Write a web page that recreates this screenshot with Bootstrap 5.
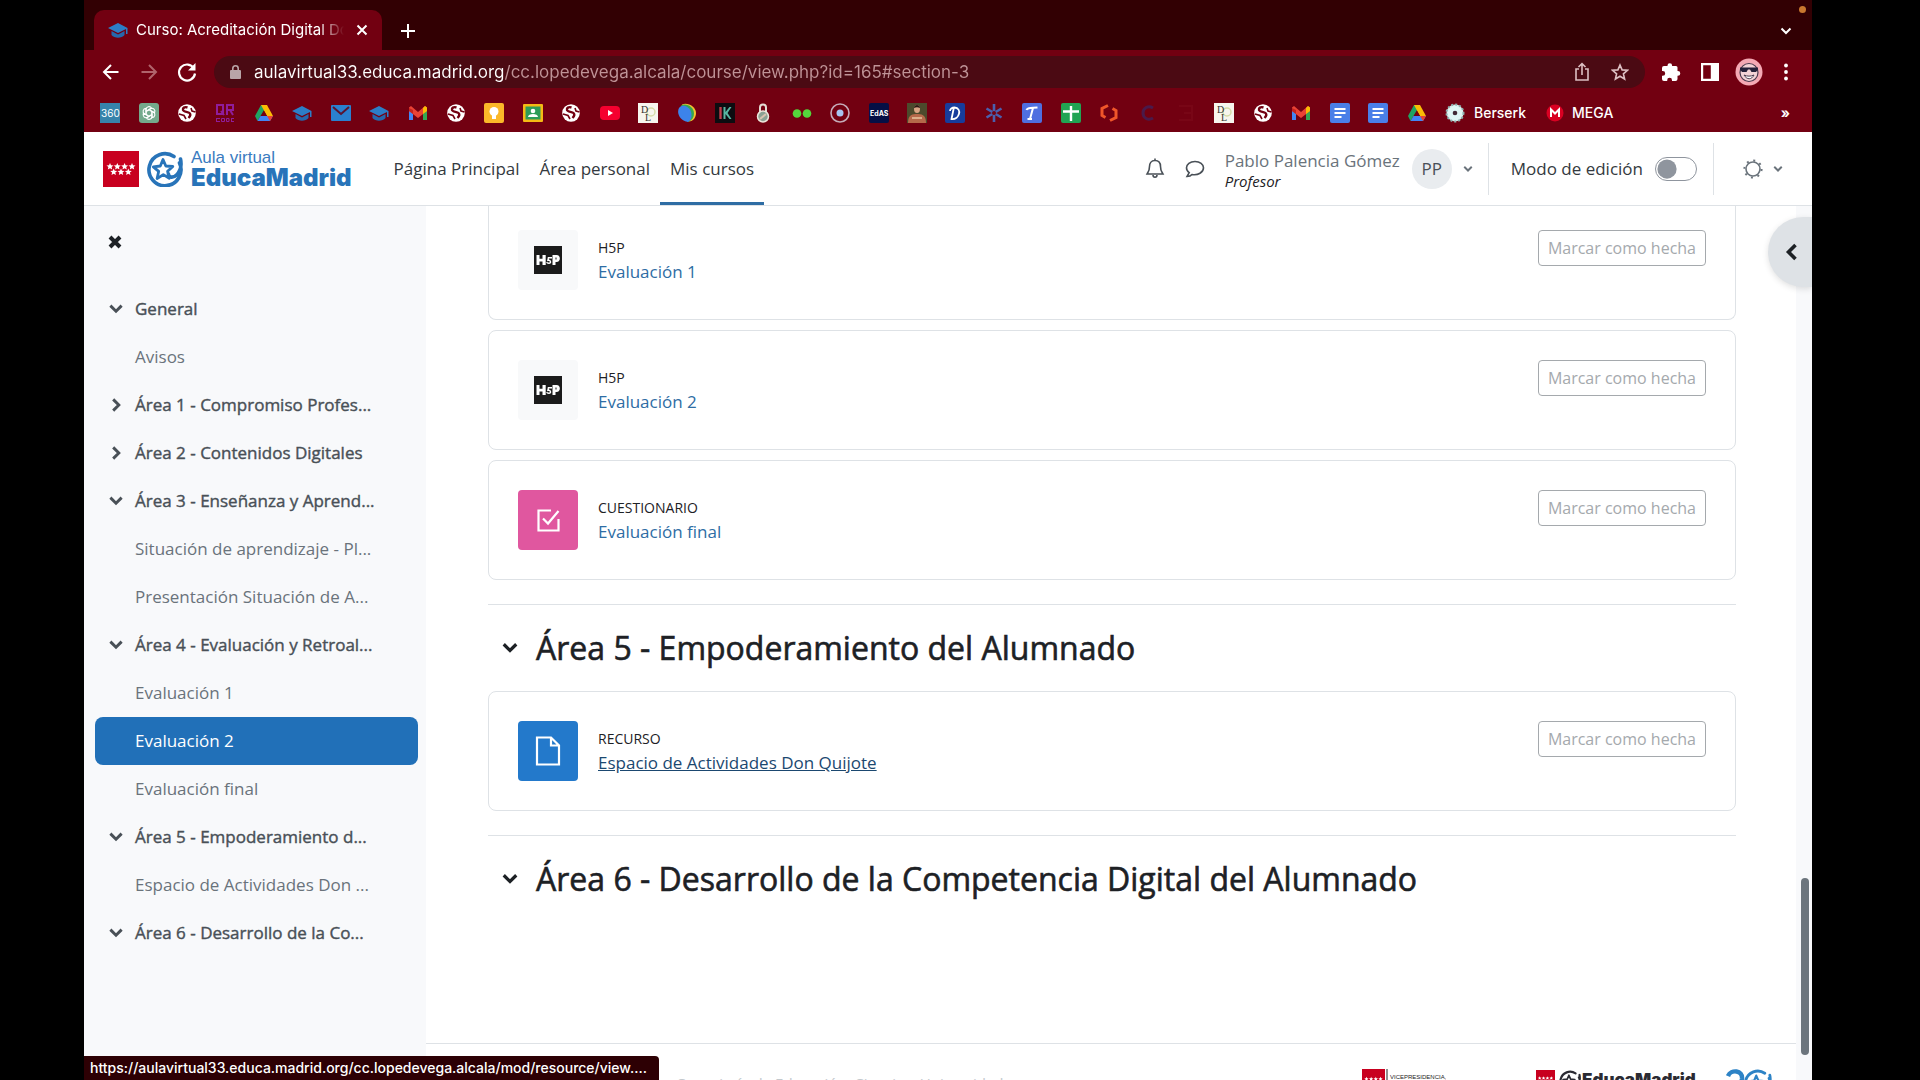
<!DOCTYPE html>
<html lang="es">
<head>
<meta charset="utf-8">
<meta name="viewport" content="width=device-width, initial-scale=1">
<title>Curso: Acreditación Digital Docente</title>
<link href="https://cdn.jsdelivr.net/npm/bootstrap@5.3.0/dist/css/bootstrap.min.css" rel="stylesheet">
<style>
body{background:#000;font-family:"Open Sans","Noto Sans",sans-serif;font-size:17px;line-height:24px;color:#1d2125}
a{text-decoration:none}
.browser{margin:0 108px 0 84px;background:#fff}
.chrome-font{font-family:Inter,"Liberation Sans",sans-serif}
.tabstrip{background:#320003;height:50px;padding-left:10px;padding-right:18px}
.tab{background:#720011;width:288px;height:40px;border-radius:10px 10px 0 0;padding:0 14px 0 14px;color:#fff;font-size:15px}
.tab-title{width:208px;-webkit-mask-image:linear-gradient(90deg,#000 88%,transparent)}
.plain{background:none;border:0;padding:0;color:inherit;display:inline-flex;align-items:center;justify-content:center}
.rec-dot{width:7px;height:7px;right:6px;top:6px;background:#c8782f}
.toolbar{background:#720011;height:44px;padding:0 23px 0 16px;color:#fff}
.urlbar{background:#4b0a13;height:32px;border-radius:16px;padding:0 16px}
.url-input{border:0;outline:0;padding:0;font-size:17px;line-height:24px;height:24px;color:#fff;background-image:linear-gradient(90deg,#fff 250px,#bf9397 250px);-webkit-background-clip:text;background-clip:text;-webkit-text-fill-color:transparent}
.fav-btn{margin-left:12px}
.bookmarks{background:#720011;height:38px;color:#fff;font-size:14px;padding-left:7px}
.bm-tail{width:338px;padding-right:22px}
.topnav{height:74px;border-bottom:1px solid #dee2e6;padding-left:19px}
.topnav .nav-link{color:#343a40;padding:0 10px;height:73px;border-top:3px solid transparent;border-bottom:3px solid transparent}
.topnav .nav-link.active{border-bottom-color:#2e6da4}
.logo-swirl{margin-left:6px;color:#2874b9}
.logo-top{font-family:"Liberation Sans",Arial,sans-serif;font-size:17px;line-height:19px;color:#3a7bc0}
.logo-name{font-family:Inter,sans-serif;font-weight:900;font-size:24px;line-height:22px;color:#2874b9}
.ink-soft{color:#6a737b}
.role{font-size:15px;line-height:16px}
.user-btn{gap:10px}
.avatar{width:40px;height:40px;background:#e9ecef;color:#495057}
.vr-line{width:1px;height:52px;background:#dee2e6}
.user-rule{margin-left:14px}
.edit-label{padding:0 12px 0 22px;color:#343a40}
.form-check-input.edit-switch{width:42px;height:24px;margin:0;border-color:#8f959e;background-color:#fff;
 --bs-form-switch-bg:url("data:image/svg+xml,%3csvg xmlns='http://www.w3.org/2000/svg' viewBox='-4 -4 8 8'%3e%3ccircle r='3.5' fill='%238f959e'/%3e%3c/svg%3e")}
.course-index{width:342px;flex:none;background:#f8f9fb;padding:24px 8px 0 11px}
.idx-list{padding-top:7px}
.idx-row{height:48px;border-radius:8px;color:#495057;padding-left:12px}
.idx-row.head{-webkit-text-stroke:.4px currentColor}
.idx-row .idx-ico{width:28px;display:flex;color:#495057}
.idx-row.sub{padding-left:40px;color:#6a737b}
.idx-row.on{background:#2170b8;color:#fff}
.course-main{padding:0 60px 0 62px}
.act-list{gap:10px}
.act{border:1px solid #dee2e6;border-radius:8px;padding:29px}
.act.cut{border-top:0;border-radius:0 0 8px 8px;padding-top:24px}
.act-ico{width:60px;height:60px;border-radius:4px}
.act-kind{font-size:14px;line-height:20px}
.act a{color:#2e6da4;line-height:28px}
.act a.hovered{color:#1b4870;text-decoration:underline}
.btn-done{font-size:16px;line-height:24px;height:36px;padding:0 9px;border:1px solid #a5a9ad;border-radius:4px;color:#a5a9ad;background:#fff}
.sect{border-top:1px solid #dee2e6;margin-top:24px}
.sect-head{height:86px;padding-left:12px}
.sect-title{font-size:32px;line-height:40px;font-weight:400;-webkit-text-stroke:.6px currentColor}
.drawer-open{right:0;top:11px;width:44px;height:70px;padding-left:4px;border-radius:36px 0 0 36px;background:#dee2e6;box-shadow:0 2px 6px rgba(0,0,0,.12)}
.gutter{width:16px;background:#f8f9fb;flex:none}
.thumb{width:8px;height:177px;right:3px;bottom:25px;background:#6c757d}
.pagefoot{height:37px;border-top:1px solid #dee2e6;padding:25px 24px 0 250px}
.foot-note{font-size:15px;line-height:20px;color:#c4c9cd;padding-top:4px}
.foot-mid{margin:0 30px 0 90px}
.status{left:0;bottom:0;height:24px;background:#2d0004;color:#fff;font-size:14px;line-height:24px;border-radius:0 4px 0 0;padding:0 12px 0 6px}
</style>
<script src="https://cdn.jsdelivr.net/npm/bootstrap@5.3.0/dist/js/bootstrap.bundle.min.js"></script>
</head>
<body>
<svg class="d-none" aria-hidden="true">
 <symbol id="down" viewBox="0 0 16 16"><path d="M3 5l5 5 5-5" fill="none" stroke="currentColor" stroke-width="2.6"/></symbol>
 <symbol id="right" viewBox="0 0 16 16"><path d="M5.500 3l5 5-5 5" fill="none" stroke="currentColor" stroke-width="2.600"/></symbol>
 <symbol id="globe" viewBox="0 0 20 20"><circle cx="10" cy="10" r="8.800" fill="#fff"/><path d="M10.500 4.500c-3-1-5 .5-4.500 2.500s5 1.500 6.500 3 1 3-1 5" fill="none" stroke="#720011" stroke-width="2.400"/><path d="M2 11l5 1.500 2 3.500M14 5l1 3 3.500 1" fill="none" stroke="#720011" stroke-width="1.600"/></symbol>
 <symbol id="drive" viewBox="0 0 20 20"><path d="M7 2h6l-6.500 11-3 5L1 13z" fill="#1fa463"/><path d="M7 2h6l6 11h-6z" fill="#fbbc05"/><path d="M6.500 13H19l-3 5H3.500z" fill="#4285f4"/><path d="M13 13h6l-3 5z" fill="#ea4335"/><path d="M10 8l3 5H7z" fill="#720011"/></symbol>
 <symbol id="cap" viewBox="0 0 20 20"><path d="M10 3L0 8l10 5 8-4v5h1.500V8z" fill="#2c7ec7"/><path d="M3.500 11v4c3 3.500 10 3.500 13 0v-4L10 14.500z" fill="#2668ad"/></symbol>
 <symbol id="gmail" viewBox="0 0 20 20"><path d="M1 6v11h4V9z" fill="#4285f4"/><path d="M19 6v11h-4V9z" fill="#34a853"/><path d="M1 4.500L3 3l7 6 7-6 2 1.500V8l-9 7-9-7z" fill="#ea4335"/><path d="M15 5l2-2 2 1.500V8l-4 3z" fill="#fbbc04"/><path d="M1 8V5l4 2v4z" fill="#c5221f"/></symbol>
 <symbol id="docs" viewBox="0 0 20 20"><rect width="20" height="20" rx="2" fill="#4a7fe8"/><path d="M4.500 6h11M4.500 10h11M4.500 14h7" stroke="#fff" stroke-width="2"/></symbol>
 <symbol id="dl" viewBox="0 0 20 20"><rect width="20" height="20" fill="#f7f5ee"/><circle cx="13" cy="9" r="4" fill="none" stroke="#d6dba8" stroke-width="1.500"/><text x="3" y="10" font-size="10" font-family="Liberation Serif" fill="#333">D</text><text x="7" y="18" font-size="10" font-family="Liberation Serif" fill="#333">L</text></symbol>
 <symbol id="stars" viewBox="0 0 36 36"><rect width="36" height="36" fill="#c8001f"/><g fill="#fff"><path id="st" d="M7 12l1 2.300 2.500.2-1.900 1.600.6 2.400L7 17.200l-2.200 1.300.6-2.400-1.900-1.600 2.500-.2z"/><use href="#st" x="7.300"/><use href="#st" x="14.600"/><use href="#st" x="22"/><use href="#st" x="3.700" y="5.500"/><use href="#st" x="11" y="5.500"/><use href="#st" x="18.300" y="5.500"/></g></symbol>
 <symbol id="swirl" viewBox="0 0 38 36"><path d="M29 5.500A16 16 0 1 0 34.500 12M35.500 8c1.500 7 0 12-4 16-3 3-8 3-8-1" fill="none" stroke="currentColor" stroke-width="3.600" stroke-linecap="round"/><path d="M18 8.500l2.800 6.500 7 .5-5.200 4.800 1.700 7-6-3.700-6.200 4 1.600-7.300-5.400-4.500 7-.8z" fill="none" stroke="currentColor" stroke-width="2.800" stroke-linejoin="round"/></symbol>
 <symbol id="h5p" viewBox="0 0 28 28"><rect width="28" height="28" fill="#1b1b1b"/><path d="M2.500 9h3v3.700h3V9h3.200v10H8.500v-3.500h-3V19h-3z" fill="#fff"/><path d="M18.500 9h4c4.500 0 4.500 7 0 7h-1v3h-3z" fill="#fff"/><path d="M21.500 11.500h1v2h-1z" fill="#1b1b1b"/><path d="M18 11.800h-3.600l-.5 2.600c3-.6 3.600 2.800 1 2.900-1.500 0-2-.6-2.200-1.200" fill="none" stroke="#fff" stroke-width="1.400"/></symbol>
</svg>

<div class="browser vh-100 d-flex flex-column overflow-hidden position-relative">
 <header class="chrome-font flex-shrink-0">
  <div class="tabstrip d-flex align-items-end position-relative">
   <div class="tab d-flex align-items-center gap-2">
    <svg width="20" height="20" class="flex-shrink-0"><use href="#cap"/></svg>
    <span class="tab-title text-nowrap overflow-hidden">Curso: Acreditación Digital Docente</span>
    <button class="plain ms-auto" aria-label="Cerrar pestaña"><svg width="12" height="12" viewBox="0 0 12 12"><path d="M1.500 1.500l9 9m0-9l-9 9" stroke="#fff" stroke-width="2"/></svg></button>
   </div>
   <button class="plain text-white h-75 ms-3" aria-label="Nueva pestaña"><svg width="20" height="20" viewBox="0 0 20 20"><path d="M10 3v14M3 10h14" stroke="#fff" stroke-width="2"/></svg></button>
   <button class="plain text-white h-75 ms-auto" aria-label="Buscar pestañas"><svg width="16" height="16" viewBox="0 0 16 16"><path d="M3.500 5.500L8 10l4.500-4.500" fill="none" stroke="#fff" stroke-width="2"/></svg></button>
   <span class="rec-dot rounded-circle position-absolute"></span>
  </div>
  <div class="toolbar d-flex align-items-center">
   <div class="d-flex gap-3 me-3">
    <button class="plain" aria-label="Atrás"><svg width="22" height="22" viewBox="0 0 22 22"><path d="M18.500 11H4.500M11 4l-7 7 7 7" fill="none" stroke="#fff" stroke-width="2"/></svg></button>
    <button class="plain" aria-label="Adelante"><svg width="22" height="22" viewBox="0 0 22 22"><path d="M3.500 11h14M11 4l7 7-7 7" fill="none" stroke="#b0646c" stroke-width="2"/></svg></button>
    <button class="plain" aria-label="Recargar"><svg width="22" height="22" viewBox="0 0 22 22"><path d="M18 7.500A8 8 0 1 0 19 12.500" fill="none" stroke="#fff" stroke-width="2.200"/><path d="M19.500 2v7.500H12z" fill="#fff"/></svg></button>
   </div>
   <div class="urlbar d-flex align-items-center flex-grow-1 gap-2">
    <svg width="12" height="14" viewBox="0 0 12 14" class="flex-shrink-0 me-1"><rect y="5" width="11" height="9" rx="1" fill="#b9a5a8"/><path d="M2.800 6V3.500a2.700 2.700 0 0 1 5.400 0V6" fill="none" stroke="#b9a5a8" stroke-width="1.600"/></svg>
    <input class="url-input flex-grow-1" type="text" aria-label="Dirección" value="aulavirtual33.educa.madrid.org/cc.lopedevega.alcala/course/view.php?id=165#section-3">
    <button class="plain" aria-label="Compartir"><svg width="18" height="20" viewBox="0 0 18 20"><path d="M6 7H3v11h12V7h-3M9 13V2M5.500 5L9 1.700 12.500 5" fill="none" stroke="#dcbfc2" stroke-width="1.600"/></svg></button>
    <button class="plain fav-btn" aria-label="Añadir a marcadores"><svg width="18" height="18" viewBox="0 0 18 18"><path d="M9 2l2.100 4.900 5.300.4-4 3.500 1.200 5.200L9 13.200 4.400 16l1.200-5.200-4-3.500 5.300-.4z" fill="none" stroke="#dcbfc2" stroke-width="1.600"/></svg></button>
   </div>
   <div class="d-flex align-items-center gap-3 ms-3">
    <button class="plain" aria-label="Extensiones"><svg width="20" height="20" viewBox="0 0 20 20"><path d="M1 6a2 2 0 0 1 2-2h3.500V3.500a2.300 2.300 0 0 1 4.600 0V4H15a1.500 1.500 0 0 1 1.500 1.500V9h.4a2.400 2.400 0 0 1 0 4.800h-.4V17a2 2 0 0 1-2 2H11v-.8a2.400 2.400 0 0 0-4.800 0v.8H3a2 2 0 0 1-2-2v-3.200h.8a2.400 2.400 0 0 0 0-4.800H1z" fill="#fff"/></svg></button>
    <button class="plain ms-1" aria-label="Panel lateral"><svg width="18" height="18" viewBox="0 0 18 18"><path d="M1 1h16v16H1zM11 1v16" fill="none" stroke="#fff" stroke-width="2.400"/><path d="M11 1h6v16h-6z" fill="#fff"/></svg></button>
    <button class="plain" aria-label="Perfil"><svg width="28" height="28" viewBox="0 0 28 28"><circle cx="14" cy="14" r="13.500" fill="#f4a9b4"/><circle cx="14" cy="14.500" r="9" fill="#f3d3d6" stroke="#4a3a4e" stroke-width="1.200"/><path d="M5 9.500h18v2l-2 2.500h-4.500l-1.500-2.500h-2L11.500 14H7l-2-2.500z" fill="#25213a"/><path d="M9 17c3 5 7.500 5 10 0-3 1.500-7 1.500-10 0z" fill="#fff" stroke="#4a3a4e"/></svg></button>
    <button class="plain ms-1" aria-label="Menú"><svg width="6" height="18" viewBox="0 0 6 18" fill="#fff"><circle cx="3" cy="2.500" r="1.900"/><circle cx="3" cy="9" r="1.900"/><circle cx="3" cy="15.500" r="1.900"/></svg></button>
   </div>
  </div>
  <nav class="bookmarks d-flex align-items-center" aria-label="Marcadores">
   <div class="d-flex flex-grow-1">
    <a class="flex-fill d-flex justify-content-center" href="#"><svg width="20" height="20" viewBox="0 0 20 20"><rect width="20" height="20" fill="#3783ab"/><text x="1" y="14" font-size="10" font-family="Inter" fill="#fff">360</text></svg></a>
    <a class="flex-fill d-flex justify-content-center" href="#"><svg width="20" height="20" viewBox="0 0 20 20"><rect width="20" height="20" rx="3" fill="#74aa8c"/><g fill="none" stroke="#fff" stroke-width="1.100"><path id="pt" d="M7 12V6.500a3 3 0 0 1 5.500-1.500L8 8"/><use href="#pt" transform="rotate(60 10 10)"/><use href="#pt" transform="rotate(120 10 10)"/><use href="#pt" transform="rotate(180 10 10)"/><use href="#pt" transform="rotate(240 10 10)"/><use href="#pt" transform="rotate(300 10 10)"/></g></svg></a>
    <a class="flex-fill d-flex justify-content-center" href="#"><svg width="20" height="20"><use href="#globe"/></svg></a>
    <a class="flex-fill d-flex justify-content-center" href="#"><svg width="20" height="20" viewBox="0 0 20 20"><path d="M2 2h6v9H2zM6 8l3 4M12 12V2h6v5h-6m3 0l3 5" fill="none" stroke="#8f1d9b" stroke-width="2"/><path d="M1 15.500h4M1 18.500h4M1.500 15v4M6.500 15.500h3v3h-3zM11.500 15.500h2.500v3h-2.500zM16 15.500h3M16 18.500h3M16.500 15v4" fill="none" stroke="#8f1d9b"/></svg></a>
    <a class="flex-fill d-flex justify-content-center" href="#"><svg width="20" height="20"><use href="#drive"/></svg></a>
    <a class="flex-fill d-flex justify-content-center" href="#"><svg width="20" height="20"><use href="#cap"/></svg></a>
    <a class="flex-fill d-flex justify-content-center" href="#"><svg width="20" height="20" viewBox="0 0 20 20"><rect y="2" width="20" height="16" rx="1" fill="#2a80cf"/><path d="M2 4l8 7 8-7" fill="none" stroke="#5a1430" stroke-width="2"/></svg></a>
    <a class="flex-fill d-flex justify-content-center" href="#"><svg width="20" height="20"><use href="#cap"/></svg></a>
    <a class="flex-fill d-flex justify-content-center" href="#"><svg width="20" height="20"><use href="#gmail"/></svg></a>
    <a class="flex-fill d-flex justify-content-center" href="#"><svg width="20" height="20"><use href="#globe"/></svg></a>
    <a class="flex-fill d-flex justify-content-center" href="#"><svg width="20" height="20" viewBox="0 0 20 20"><rect width="20" height="20" rx="2" fill="#fbb829"/><circle cx="10" cy="8.500" r="4.500" fill="#fff"/><path d="M8 12h4v4H8z" fill="#fff"/></svg></a>
    <a class="flex-fill d-flex justify-content-center" href="#"><svg width="20" height="20" viewBox="0 0 20 20"><rect y="1" width="20" height="18" rx="1" fill="#f5ba14"/><rect x="2.500" y="3.500" width="15" height="13" fill="#2e9c58"/><circle cx="10" cy="8" r="2.300" fill="#fff"/><path d="M5 14c0-4 10-4 10 0z" fill="#fff"/></svg></a>
    <a class="flex-fill d-flex justify-content-center" href="#"><svg width="20" height="20"><use href="#globe"/></svg></a>
    <a class="flex-fill d-flex justify-content-center" href="#"><svg width="20" height="20" viewBox="0 0 20 20"><rect y="3" width="20" height="14" rx="4" fill="#f5002f"/><path d="M8 7l5 3-5 3z" fill="#fff"/></svg></a>
    <a class="flex-fill d-flex justify-content-center" href="#"><svg width="20" height="20"><use href="#dl"/></svg></a>
    <a class="flex-fill d-flex justify-content-center" href="#"><svg width="20" height="20" viewBox="0 0 20 20"><path d="M5 1.500C11-1 19 4 19 10c0 5-3 8-7 8.500z" fill="#f2c230"/><path d="M4 2.500c6-3 13 2 13 8 0 4-2 7-6 8.500z" fill="#35a853"/><path d="M2 5c3-4 9-2 11.500 2.500 2 4 1 9.500-2.500 11.500C4 18-1 11 2 5z" fill="#3c83ea"/></svg></a>
    <a class="flex-fill d-flex justify-content-center" href="#"><svg width="20" height="20" viewBox="0 0 20 20"><rect width="20" height="20" fill="#0c0c10"/><path d="M5.500 4v12" stroke="#c23b4b" stroke-width="2.400"/><path d="M8.500 4h2v5l4-5h2l-4 6 4 6h-2l-4-5v5h-2z" fill="#57b6a1"/></svg></a>
    <a class="flex-fill d-flex justify-content-center" href="#"><svg width="20" height="20" viewBox="0 0 20 20"><path d="M7 9V4.500a3 3 0 0 1 6 0V9" fill="none" stroke="#e4ddd5" stroke-width="2"/><circle cx="10" cy="13.500" r="5.500" fill="#8ba193" stroke="#ede6db" stroke-width="1.500"/><path d="M7 16l6-5" stroke="#d8c3b0" stroke-width="2"/></svg></a>
    <a class="flex-fill d-flex justify-content-center" href="#"><svg width="20" height="20" viewBox="0 0 20 20"><circle cx="5" cy="10.500" r="4.300" fill="#54d63c"/><circle cx="15" cy="10.500" r="4.300" fill="#54d63c"/></svg></a>
    <a class="flex-fill d-flex justify-content-center" href="#"><svg width="20" height="20" viewBox="0 0 20 20"><circle cx="10" cy="10" r="9" fill="none" stroke="#c5aab8" stroke-width="1.600"/><circle cx="10" cy="10" r="3.500" fill="#a8c4f0"/></svg></a>
    <a class="flex-fill d-flex justify-content-center" href="#"><svg width="20" height="20" viewBox="0 0 20 20"><rect width="20" height="20" rx="2" fill="#050f45"/><text x="1" y="13" font-size="7" font-weight="700" font-family="Inter" fill="#fff">EdAS</text></svg></a>
    <a class="flex-fill d-flex justify-content-center" href="#"><svg width="20" height="20" viewBox="0 0 20 20"><rect width="20" height="20" fill="#4c4a2c"/><path d="M1 20c0-9 5-9 9-9s9 0 9 9z" fill="#b5694a"/><ellipse cx="10" cy="6" rx="3" ry="4" fill="#d8a483"/><path d="M7 5c0-4 6-4 6 0-2-1-4-1-6 0z" fill="#2a1a14"/><path d="M5 15h10" stroke="#dcae8a" stroke-width="2"/></svg></a>
    <a class="flex-fill d-flex justify-content-center" href="#"><svg width="20" height="20" viewBox="0 0 20 20"><rect width="20" height="20" rx="2" fill="#173c9c"/><path d="M9 4L6.500 16c8 1 11-11 3-11.500C7 4.500 5 6 5 8" fill="none" stroke="#fff" stroke-width="1.800"/></svg></a>
    <a class="flex-fill d-flex justify-content-center" href="#"><svg width="20" height="20" viewBox="0 0 20 20"><path d="M10 1v18M2.500 5.500l15 9M2.500 14.500l15-9" stroke="#4a5fae" stroke-width="2.600"/><circle cx="10" cy="10" r="2" fill="#720011"/></svg></a>
    <a class="flex-fill d-flex justify-content-center" href="#"><svg width="20" height="20" viewBox="0 0 20 20"><rect width="20" height="20" rx="2" fill="#4f6fe0"/><path d="M4.500 7c1-3 5-2 11-2.500M11 5L8 16M5.500 16H10" fill="none" stroke="#fff" stroke-width="2"/></svg></a>
    <a class="flex-fill d-flex justify-content-center" href="#"><svg width="20" height="20" viewBox="0 0 20 20"><rect width="20" height="20" rx="2" fill="#21a453"/><path d="M10 3v15M2 8.500h16" stroke="#fff" stroke-width="2.400"/></svg></a>
    <a class="flex-fill d-flex justify-content-center" href="#"><svg width="20" height="20" viewBox="0 0 20 20"><path d="M9 2.500L3 5.500v7l3.500 2M11 17.500l6-3v-7l-3.500-2" fill="none" stroke="#f0562a" stroke-width="3"/></svg></a>
    <a class="flex-fill d-flex justify-content-center" href="#"><svg width="20" height="20" viewBox="0 0 20 20"><path d="M15 5C10 2 5 5 5 10s5 8 10 5" fill="none" stroke="#4a1a4a" stroke-width="3"/></svg></a>
    <a class="flex-fill d-flex justify-content-center" href="#"><svg width="20" height="20" viewBox="0 0 20 20"><path d="M3 3h13v14H3M8 10h8" fill="none" stroke="#780616" stroke-width="2"/></svg></a>
    <a class="flex-fill d-flex justify-content-center" href="#"><svg width="20" height="20"><use href="#dl"/></svg></a>
    <a class="flex-fill d-flex justify-content-center" href="#"><svg width="20" height="20"><use href="#globe"/></svg></a>
    <a class="flex-fill d-flex justify-content-center" href="#"><svg width="20" height="20"><use href="#gmail"/></svg></a>
    <a class="flex-fill d-flex justify-content-center" href="#"><svg width="20" height="20"><use href="#docs"/></svg></a>
    <a class="flex-fill d-flex justify-content-center" href="#"><svg width="20" height="20"><use href="#docs"/></svg></a>
    <a class="flex-fill d-flex justify-content-center" href="#"><svg width="20" height="20"><use href="#drive"/></svg></a>
    <a class="flex-fill d-flex justify-content-center" href="#"><svg width="20" height="20" viewBox="0 0 20 20"><circle cx="10" cy="10" r="8.500" fill="#d9f0ee" stroke="#8fb0ae" stroke-dasharray="2 2" stroke-width="2"/><circle cx="10" cy="10" r="7" fill="#e0f7f5"/><circle cx="10" cy="10" r="2.300" fill="#412a35"/></svg></a>
   </div>
   <div class="bm-tail d-flex align-items-center flex-shrink-0">
    <a class="text-white fw-medium" href="#">Berserk</a>
    <a class="text-white fw-medium d-flex align-items-center gap-2 ms-3" href="#"><svg class="ms-1" width="18" height="18" viewBox="0 0 18 18"><circle cx="9" cy="9" r="8.500" fill="#d90022"/><path d="M5 13V5.500l4 4 4-4V13" fill="none" stroke="#fff" stroke-width="2"/></svg>MEGA</a>
    <button class="plain ms-auto fw-bold" aria-label="Más marcadores">»</button>
   </div>
  </nav>
 </header>

 <nav class="topnav d-flex align-items-center flex-shrink-0 bg-white">
  <a class="d-flex align-items-center" href="#">
   <svg width="36" height="36"><use href="#stars"/></svg>
   <svg width="38" height="36" class="logo-swirl"><use href="#swirl"/></svg>
   <span class="d-flex flex-column ms-1 ps-1"><span class="logo-top">Aula virtual</span><span class="logo-name">EducaMadrid</span></span>
  </a>
  <div class="nav flex-nowrap ps-4 ms-2">
   <a class="nav-link d-flex align-items-center" href="#">Página Principal</a>
   <a class="nav-link d-flex align-items-center" href="#">Área personal</a>
   <a class="nav-link active d-flex align-items-center" href="#" aria-current="page">Mis cursos</a>
  </div>
  <div class="d-flex align-items-center ms-auto">
   <button class="plain ink-soft me-3" aria-label="Notificaciones"><svg width="20" height="22" viewBox="0 0 20 22"><path d="M10 2.500c-4 0-5.500 3-5.500 6C4.500 13 3 14 2 16h16c-1-2-2.500-3-2.500-7.500 0-3-1.500-6-5.500-6zM10 .5v2M8 17c0 3 4 3 4 0" fill="none" stroke="#495057" stroke-width="1.600"/></svg></button>
   <button class="plain me-3" aria-label="Mensajes"><svg class="ms-1" width="20" height="18" viewBox="0 0 20 18"><path d="M10 1.500c-5 0-8.500 2.800-8.500 6.300 0 2 1 3.700 2.700 4.800L2 16.500c2.500 0 4.200-1 5-2 6 1 11.500-2 11.500-6.700 0-3.500-3.500-6.300-8.500-6.300z" fill="none" stroke="#495057" stroke-width="1.600"/></svg></button>
   <div class="d-flex flex-column ms-1"><span class="ink-soft text-nowrap">Pablo Palencia Gómez</span><em class="role">Profesor</em></div>
   <button class="plain user-btn ms-2" aria-label="Menú de usuario"><span class="avatar rounded-circle d-flex align-items-center justify-content-center ms-1">PP</span><svg width="12" height="12" class="ink-soft"><use href="#down"/></svg></button>
   <span class="vr-line user-rule"></span>
   <label class="edit-label text-nowrap" for="edit">Modo de edición</label>
   <div class="form-switch p-0 d-flex"><input class="form-check-input edit-switch" type="checkbox" role="switch" id="edit"></div>
   <span class="vr-line ms-3 me-4"></span>
   <button class="plain gap-2 ink-soft ms-1 me-4" aria-label="Accesibilidad"><svg width="22" height="22" viewBox="0 0 22 22"><circle cx="11" cy="11" r="7" fill="none" stroke="currentColor" stroke-width="1.600"/><circle cx="11" cy="11" r="8.600" fill="none" stroke="currentColor" stroke-width="2" stroke-dasharray="2 4.750"/></svg><svg width="12" height="12" class="me-1"><use href="#down"/></svg></button>
  </div>
 </nav>

 <div class="d-flex flex-grow-1 overflow-hidden position-relative">
  <aside class="course-index">
   <button class="plain ms-2 mb-4" aria-label="Cerrar índice del curso"><svg width="24" height="24" viewBox="0 0 24 24"><path d="M7 7l10 10m0-10L7 17" stroke="#1d2125" stroke-width="4"/></svg></button>
   <nav class="idx-list d-flex flex-column" aria-label="Índice del curso">
    <a class="idx-row head d-flex align-items-center" href="#"><span class="idx-ico"><svg width="18" height="18"><use href="#down"/></svg></span>General</a>
    <a class="idx-row sub d-flex align-items-center" href="#">Avisos</a>
    <a class="idx-row head d-flex align-items-center" href="#"><span class="idx-ico"><svg width="18" height="18"><use href="#right"/></svg></span>Área 1 - Compromiso Profes...</a>
    <a class="idx-row head d-flex align-items-center" href="#"><span class="idx-ico"><svg width="18" height="18"><use href="#right"/></svg></span>Área 2 - Contenidos Digitales</a>
    <a class="idx-row head d-flex align-items-center" href="#"><span class="idx-ico"><svg width="18" height="18"><use href="#down"/></svg></span>Área 3 - Enseñanza y Aprend...</a>
    <a class="idx-row sub d-flex align-items-center" href="#">Situación de aprendizaje - Pl...</a>
    <a class="idx-row sub d-flex align-items-center" href="#">Presentación Situación de A...</a>
    <a class="idx-row head d-flex align-items-center" href="#"><span class="idx-ico"><svg width="18" height="18"><use href="#down"/></svg></span>Área 4 - Evaluación y Retroal...</a>
    <a class="idx-row sub d-flex align-items-center" href="#">Evaluación 1</a>
    <a class="idx-row sub on d-flex align-items-center" href="#" aria-current="true">Evaluación 2</a>
    <a class="idx-row sub d-flex align-items-center" href="#">Evaluación final</a>
    <a class="idx-row head d-flex align-items-center" href="#"><span class="idx-ico"><svg width="18" height="18"><use href="#down"/></svg></span>Área 5 - Empoderamiento d...</a>
    <a class="idx-row sub d-flex align-items-center" href="#">Espacio de Actividades Don ...</a>
    <a class="idx-row head d-flex align-items-center" href="#"><span class="idx-ico"><svg width="18" height="18"><use href="#down"/></svg></span>Área 6 - Desarrollo de la Co...</a>
   </nav>
  </aside>

  <div class="d-flex flex-column flex-grow-1 overflow-hidden">
   <main class="course-main flex-grow-1">
    <div class="act-list d-flex flex-column">
     <article class="act cut d-flex align-items-start">
      <span class="act-ico bg-light d-flex align-items-center justify-content-center"><svg width="28" height="28"><use href="#h5p"/></svg></span>
      <div class="ms-3 ps-1 pt-2"><div class="act-kind">H5P</div><a class="d-block" href="#">Evaluación 1</a></div>
      <button class="btn-done ms-auto">Marcar como hecha</button>
     </article>
     <article class="act d-flex align-items-start">
      <span class="act-ico bg-light d-flex align-items-center justify-content-center"><svg width="28" height="28"><use href="#h5p"/></svg></span>
      <div class="ms-3 ps-1 pt-2"><div class="act-kind">H5P</div><a class="d-block" href="#">Evaluación 2</a></div>
      <button class="btn-done ms-auto">Marcar como hecha</button>
     </article>
     <article class="act d-flex align-items-start">
      <span class="act-ico d-flex align-items-center justify-content-center" style="background:#e0579f"><svg width="24" height="24" viewBox="0 0 24 24"><path d="M15 2.500H2.500v20h20V11M7 10.500l5 5L22.500 3" fill="none" stroke="#fff" stroke-width="2.200"/></svg></span>
      <div class="ms-3 ps-1 pt-2"><div class="act-kind">CUESTIONARIO</div><a class="d-block" href="#">Evaluación final</a></div>
      <button class="btn-done ms-auto">Marcar como hecha</button>
     </article>
    </div>
    <section class="sect">
     <div class="sect-head d-flex align-items-center">
      <svg width="20" height="20" class="me-3"><use href="#down"/></svg><h3 class="sect-title mb-0">Área 5 - Empoderamiento del Alumnado</h3>
     </div>
     <article class="act d-flex align-items-start">
      <span class="act-ico d-flex align-items-center justify-content-center" style="background:#2379cb"><svg width="26" height="30" viewBox="0 0 26 30"><path d="M2 1.500h14l8 8v19H2zM16 1.500v8h8" fill="none" stroke="#fff" stroke-width="2.200"/></svg></span>
      <div class="ms-3 ps-1 pt-2"><div class="act-kind">RECURSO</div><a class="d-block hovered" href="#">Espacio de Actividades Don Quijote</a></div>
      <button class="btn-done ms-auto">Marcar como hecha</button>
     </article>
    </section>
    <section class="sect">
     <div class="sect-head d-flex align-items-center">
      <svg width="20" height="20" class="me-3"><use href="#down"/></svg><h3 class="sect-title mb-0">Área 6 - Desarrollo de la Competencia Digital del Alumnado</h3>
     </div>
    </section>
   </main>
   <footer class="pagefoot d-flex align-items-start overflow-hidden flex-shrink-0">
    <span class="foot-note text-nowrap">Consejería de Educación, Ciencia y Universidades</span>
    <svg class="ms-auto flex-shrink-0" width="84" height="36" viewBox="0 0 84 36"><svg width="23" height="23"><use href="#stars"/></svg><path d="M25 0v30" stroke="#222"/><text x="28" y="10" font-size="6" font-family="Liberation Sans" fill="#222">VICEPRESIDENCIA,</text></svg>
    <svg class="foot-mid flex-shrink-0" width="160" height="36" viewBox="0 0 160 36"><svg y="1" width="19" height="19"><use href="#stars"/></svg><svg x="22" y="1" width="23" height="22" color="#2b2b33"><use href="#swirl"/></svg><text x="46" y="17" font-size="17" font-weight="900" font-family="Inter" fill="#2b2b33">EducaMadrid</text></svg>
    <svg class="flex-shrink-0" width="46" height="36" viewBox="0 0 46 36"><path d="M2 7c3-7 15-6 14 3-1 6-9 10-13 18" fill="none" stroke="#2d83c6" stroke-width="4.500"/><svg x="16" width="30" height="28" color="#2d83c6"><use href="#swirl"/></svg></svg>
   </footer>
  </div>
  <div class="gutter"></div>
  <span class="thumb position-absolute rounded-pill"></span>
  <button class="plain drawer-open position-absolute" aria-label="Abrir cajón de bloques"><svg width="20" height="24" viewBox="0 0 20 24"><path d="M13.500 5l-7 7 7 7" fill="none" stroke="#1d2125" stroke-width="3.600"/></svg></button>
 </div>
 <div class="status chrome-font position-absolute fw-medium">https://aulavirtual33.educa.madrid.org/cc.lopedevega.alcala/mod/resource/view....</div>
</div>
</body>
</html>
